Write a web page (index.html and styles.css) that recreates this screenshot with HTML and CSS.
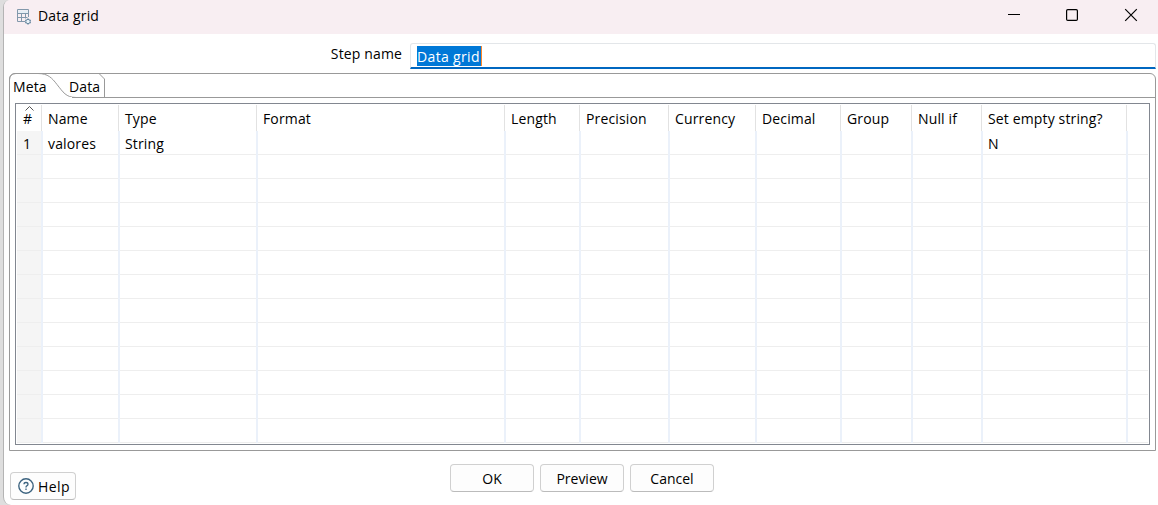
FILE: index.html
```html
<!DOCTYPE html>
<html lang="en">
<head>
<meta charset="utf-8">
<title>Data grid</title>
<link rel="stylesheet" href="styles.css">
</head>
<body>
<div class="window">
  <header class="titlebar">
    <svg class="app-icon" width="17" height="17" viewBox="0 0 17 17" fill="none" stroke="#8298ab">
      <path d="M1.500 1.500h11v3h-11z" fill="#e6eef5" stroke="none"/>
      <path d="M9 12.500H1.500V.5H12.500V8M1.500 4.500H12.500M1.500 8.500h10M5.500 4.500v8M9.500 4.500v5"/>
      <circle cx="12" cy="12.500" r="2.200" fill="#e8f1f8" stroke="#66879f"/>
      <path d="M12 9.300v1M12 14.700v1M9 11l1 .6M9 14l1-.6M15 11l-1 .6M15 14l-1-.6" stroke="#66879f"/>
    </svg>
    <span class="title">Data grid</span>
    <svg class="controls" width="131" height="14" viewBox="0 0 131 14" fill="none" stroke="#000">
      <path d="M0 6.500h12"/>
      <rect x="58.600" y="1.600" width="10.800" height="10.800" rx="1.200" stroke-width="1.200"/>
      <path d="M117.200 1.200l11.600 11.600M128.800 1.200l-11.600 11.600" stroke-width="1.200"/>
    </svg>
  </header>
  <div class="step-row">
    <label class="step-label">Step name</label>
    <div class="step-input"><span class="selected">Data grid</span></div>
  </div>
  <section class="folder">
    <div class="tabs">
      <span class="tab-label meta">Meta</span>
      <span class="tab-label data">Data</span>
      <svg class="tab-shape" width="98" height="25" viewBox="0 0 98 25" fill="none" stroke="#999">
        <path d="M.5 25V7Q.5 .5 7 .5H29C39 .5 43 5 48 11.500C54 19 57 24.500 67 24.500M29 .5H90L95.500 6V24.500"/>
      </svg>
    </div>
    <div class="table">
      <div class="row head">
        <span class="cell sort">#<svg class="arrow" width="9" height="5" viewBox="0 0 9 5" fill="none" stroke="#555"><path d="M.5 4.500l4-4 4 4"/></svg></span>
        <span class="cell">Name</span><span class="cell">Type</span><span class="cell">Format</span><span class="cell">Length</span><span class="cell">Precision</span><span class="cell">Currency</span><span class="cell">Decimal</span><span class="cell">Group</span><span class="cell">Null if</span><span class="cell">Set empty string?</span><span class="cell"></span>
      </div>
      <div class="row"><span class="cell">1</span><span class="cell">valores</span><span class="cell">String</span><span class="cell"></span><span class="cell"></span><span class="cell"></span><span class="cell"></span><span class="cell"></span><span class="cell"></span><span class="cell"></span><span class="cell">N</span><span class="cell"></span></div>
      <div class="row"><span class="cell"></span><span class="cell"></span><span class="cell"></span><span class="cell"></span><span class="cell"></span><span class="cell"></span><span class="cell"></span><span class="cell"></span><span class="cell"></span><span class="cell"></span><span class="cell"></span><span class="cell"></span></div>
      <div class="row"><span class="cell"></span><span class="cell"></span><span class="cell"></span><span class="cell"></span><span class="cell"></span><span class="cell"></span><span class="cell"></span><span class="cell"></span><span class="cell"></span><span class="cell"></span><span class="cell"></span><span class="cell"></span></div>
      <div class="row"><span class="cell"></span><span class="cell"></span><span class="cell"></span><span class="cell"></span><span class="cell"></span><span class="cell"></span><span class="cell"></span><span class="cell"></span><span class="cell"></span><span class="cell"></span><span class="cell"></span><span class="cell"></span></div>
      <div class="row"><span class="cell"></span><span class="cell"></span><span class="cell"></span><span class="cell"></span><span class="cell"></span><span class="cell"></span><span class="cell"></span><span class="cell"></span><span class="cell"></span><span class="cell"></span><span class="cell"></span><span class="cell"></span></div>
      <div class="row"><span class="cell"></span><span class="cell"></span><span class="cell"></span><span class="cell"></span><span class="cell"></span><span class="cell"></span><span class="cell"></span><span class="cell"></span><span class="cell"></span><span class="cell"></span><span class="cell"></span><span class="cell"></span></div>
      <div class="row"><span class="cell"></span><span class="cell"></span><span class="cell"></span><span class="cell"></span><span class="cell"></span><span class="cell"></span><span class="cell"></span><span class="cell"></span><span class="cell"></span><span class="cell"></span><span class="cell"></span><span class="cell"></span></div>
      <div class="row"><span class="cell"></span><span class="cell"></span><span class="cell"></span><span class="cell"></span><span class="cell"></span><span class="cell"></span><span class="cell"></span><span class="cell"></span><span class="cell"></span><span class="cell"></span><span class="cell"></span><span class="cell"></span></div>
      <div class="row"><span class="cell"></span><span class="cell"></span><span class="cell"></span><span class="cell"></span><span class="cell"></span><span class="cell"></span><span class="cell"></span><span class="cell"></span><span class="cell"></span><span class="cell"></span><span class="cell"></span><span class="cell"></span></div>
      <div class="row"><span class="cell"></span><span class="cell"></span><span class="cell"></span><span class="cell"></span><span class="cell"></span><span class="cell"></span><span class="cell"></span><span class="cell"></span><span class="cell"></span><span class="cell"></span><span class="cell"></span><span class="cell"></span></div>
      <div class="row"><span class="cell"></span><span class="cell"></span><span class="cell"></span><span class="cell"></span><span class="cell"></span><span class="cell"></span><span class="cell"></span><span class="cell"></span><span class="cell"></span><span class="cell"></span><span class="cell"></span><span class="cell"></span></div>
      <div class="row"><span class="cell"></span><span class="cell"></span><span class="cell"></span><span class="cell"></span><span class="cell"></span><span class="cell"></span><span class="cell"></span><span class="cell"></span><span class="cell"></span><span class="cell"></span><span class="cell"></span><span class="cell"></span></div>
      <div class="row"><span class="cell"></span><span class="cell"></span><span class="cell"></span><span class="cell"></span><span class="cell"></span><span class="cell"></span><span class="cell"></span><span class="cell"></span><span class="cell"></span><span class="cell"></span><span class="cell"></span><span class="cell"></span></div>
    </div>
  </section>
  <footer class="footer">
    <button class="button help">
      <svg width="16" height="16" viewBox="0 0 16 16" fill="none" stroke="#3d6480"><circle cx="8" cy="8" r="7.200" stroke-width="1.400"/><path d="M6 6.300Q6 4.500 8 4.500T10 6.300Q10 7.200 8.800 7.800Q8 8.200 8 9.400M8 10.500V12" stroke-width="1.300"/></svg>
      <span>Help</span>
    </button>
    <div class="actions">
      <button class="button">OK</button>
      <button class="button">Preview</button>
      <button class="button">Cancel</button>
    </div>
  </footer>
</div>
</body>
</html>
```
FILE: styles.css
```css
* { box-sizing: border-box; }
body {
  margin: 0;
  height: 505px;
  overflow: hidden;
  padding-left: 3px;
  background: #dedede;
  font: 14px/20px "Open Sans", "Noto Sans", sans-serif;
  letter-spacing: 0.14px;
  color: #000;
}
.window {
  height: 505px;
  background: #fff;
  border-left: 1px solid #b4b4b4;
  border-radius: 7px 0 0 8px;
  overflow: hidden;
}
.titlebar {
  height: 34px;
  background: #f8eef2;
  display: flex;
  align-items: flex-start;
  padding: 8px 19px 0 12px;
}
.app-icon { margin-top: 1px; }
.title { margin: -2px auto 0 5px; }
.controls { width: 131px; }
.step-row { height: 39px; display: flex; padding-top: 9px; }
.step-label { width: 398px; padding-top: 1px; text-align: right; }
.step-input {
  margin-left: 8px;
  width: 746px;
  height: 26px;
  border: 1px solid #e3e6e9;
  border-bottom: 2px solid #0067c0;
  border-radius: 3px 3px 0 0;
  padding: 2px 6px;
}
.selected {
  display: block;
  width: 65px;
  height: 20px;
  line-height: 22px;
  background: #0078d7;
  border-right: 1px solid #ff8728;
  color: #fff;
  letter-spacing: 0.35px;
  white-space: nowrap;
}
.folder {
  margin-left: 5px;
  width: 1147px;
  height: 378px;
  border: 1px solid #999;
  border-top-right-radius: 6px;
  border-top-left-radius: 6px;
}
.tabs {
  position: relative;
  height: 24px;
  border-bottom: 1px solid #999;
  display: flex;
  padding: 3px 0 0 3px;
}
/* The active tab is open towards the panel below it. */
.tabs::after {
  content: "";
  position: absolute;
  left: 0;
  bottom: -1px;
  width: 62px;
  height: 1px;
  background: #fff;
}
.tab-label { width: 56px; }
.tab-shape { position: absolute; left: -1px; top: -1px; }
.table {
  margin: 5px;
  width: 1135px;
  height: 342px;
  border: 1px solid #828790;
  padding: 1px 1px 0;
}
.row {
  display: grid;
  grid-template-columns: 26px 77px 138px 248px 75px 89px 87px 85px 71px 70px 145px 1fr;
  height: 24px;
}
.cell {
  border-right: 2px solid #ebf1fa;
  box-shadow: inset 0 -1px #eee;
  padding: 3px 0 0 5px;
  white-space: nowrap;
}
.cell:first-child { background: #f5f5f5; background-clip: padding-box; padding-left: 6px; }
.cell:last-child { border-right: 0; }
.head { height: 26px; }
.head .cell {
  border-right: 1px solid #e2e2e2;
  margin-right: 1px;
  box-shadow: none;
  padding-top: 4px;
}
.head .cell:first-child { background: #fff; }
.head .cell:last-child { border: 0; }
.sort { position: relative; }
.arrow { position: absolute; left: 8px; top: 1px; }
.footer { display: flex; padding: 13px 0 0 6px; }
.button {
  width: 84px;
  height: 28px;
  padding: 2px 0 0;
  border: 1px solid #d0d0d0;
  border-bottom-color: #bbb;
  border-radius: 4px;
  background: #fdfdfd;
  font: inherit;
  letter-spacing: 0;
  color: inherit;
}
.help {
  margin-top: 8px;
  width: 66px;
  display: flex;
  align-items: flex-start;
  padding: 5px 0 0 7px;
  gap: 4px;
  letter-spacing: 0.4px;
}
.help span { line-height: 18px; }
.actions { margin-left: 374px; display: flex; gap: 6px; }
```
